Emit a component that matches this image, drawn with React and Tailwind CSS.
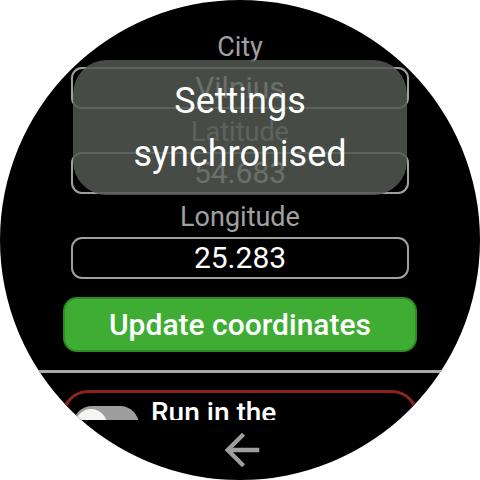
const Field = ({ label, value, top }) => (
  <div className={`flex shrink-0 flex-col items-center ${top}`}>
    <div className="h-[32px] text-[27px] leading-[32px] text-[#a0a0a0]">{label}</div>
    <div className="mt-[4px] flex h-[42px] w-[338px] items-center justify-center rounded-[11px] border-2 border-[#a0a0a0] text-[30px] leading-none text-white">
      {value}
    </div>
  </div>
);

const App = () => {
  return (
    <div className="h-[480px] w-[480px] bg-white" style={{ fontFamily: "Roboto, sans-serif" }}>
      <div className="relative flex h-[480px] w-[480px] flex-col overflow-hidden rounded-full bg-black">
        {/* Scrolling list */}
        <div className="flex h-[420px] shrink-0 flex-col items-center overflow-hidden">
          <Field label="City" value="Vilnius" top="mt-[31px]" />
          <Field label="Latitude" value="54.683" top="mt-[7px]" />
          <Field label="Longitude" value="25.283" top="mt-[7px]" />

          <button className="mt-[18px] flex h-[55px] w-[354px] shrink-0 items-center justify-center rounded-[14px] border-2 border-[#2c8a22] bg-[#3fad34] text-[30px] font-medium leading-none text-white">
            Update coordinates
          </button>

          <div className="mt-[18px] h-[3px] w-full shrink-0 bg-[#a8a8a8]" />

          <div className="mt-[17px] flex h-[90px] w-[356px] shrink-0 items-start gap-[12px] rounded-[26px] border-[3px] border-[#8b2420] pl-[8px] pt-[4px]">
            <div className="mt-[9px] flex h-[38px] w-[66px] shrink-0 items-center rounded-full bg-[#9e9e9e] px-[2px]">
              <div className="h-[32px] w-[32px] rounded-full bg-[#f4f6f2]" />
            </div>
            <div className="w-[200px] text-[28px] font-medium leading-[32px] text-white">Run in the background</div>
          </div>
        </div>

        {/* Back */}
        <div className="flex h-[60px] shrink-0 items-center justify-center pl-[3px]">
          <svg width="52" height="52" viewBox="0 0 24 24" fill="#9e9e9e">
            <path d="M20 11H7.83l5.59-5.59L12 4l-8 8 8 8 1.41-1.41L7.83 13H20v-2z" />
          </svg>
        </div>

        {/* Toast */}
        <div className="absolute left-[73px] top-[60px] flex h-[135px] w-[334px] flex-col items-center justify-center rounded-[34px] bg-[rgba(81,88,80,0.86)] text-center text-[36px] leading-[53px] text-white">
          <div>Settings</div>
          <div>synchronised</div>
        </div>
      </div>
    </div>
  );
};

export default App;
